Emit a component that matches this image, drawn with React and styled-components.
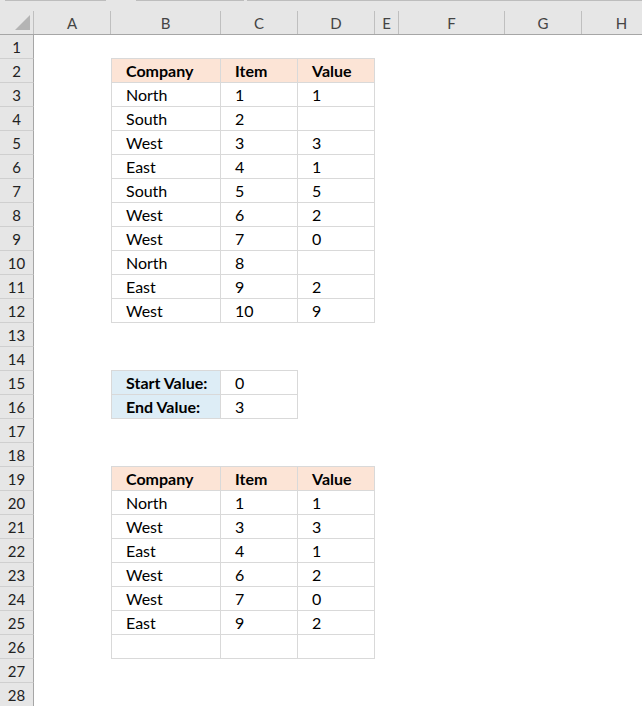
import React from 'react';
import styled, { createGlobalStyle } from 'styled-components';

const GlobalStyle = createGlobalStyle`
  html, body {
    margin: 0;
    padding: 0;
    background: #ffffff;
  }
  * {
    box-sizing: border-box;
  }
`;

const COLUMNS = [
  { name: 'A', width: 77 },
  { name: 'B', width: 110 },
  { name: 'C', width: 77 },
  { name: 'D', width: 77 },
  { name: 'E', width: 24 },
  { name: 'F', width: 106 },
  { name: 'G', width: 77 },
  { name: 'H', width: 80 },
];

const TEMPLATE = `34px ${COLUMNS.map((c) => `${c.width}px`).join(' ')}`;

// rows of [B, C, D]
const firstTable = [
  ['North', '1', '1'],
  ['South', '2', ''],
  ['West', '3', '3'],
  ['East', '4', '1'],
  ['South', '5', '5'],
  ['West', '6', '2'],
  ['West', '7', '0'],
  ['North', '8', ''],
  ['East', '9', '2'],
  ['West', '10', '9'],
];

const secondTable = [
  ['North', '1', '1'],
  ['West', '3', '3'],
  ['East', '4', '1'],
  ['West', '6', '2'],
  ['West', '7', '0'],
  ['East', '9', '2'],
  ['', '', ''],
];

const buildRows = () => {
  const rows = {};
  const header = ['Company', 'Item', 'Value'];
  rows[2] = header.map((text) => ({ text, bold: true, fill: '#fce4d6', top: true }));
  firstTable.forEach((r, i) => {
    rows[3 + i] = r.map((text) => ({ text }));
  });
  rows[15] = [
    { text: 'Start Value:', bold: true, fill: '#ddedf6', top: true },
    { text: '0', top: true },
  ];
  rows[16] = [
    { text: 'End Value:', bold: true, fill: '#ddedf6' },
    { text: '3' },
  ];
  rows[19] = header.map((text) => ({ text, bold: true, fill: '#fce4d6', top: true }));
  secondTable.forEach((r, i) => {
    rows[20 + i] = r.map((text) => ({ text }));
  });
  return rows;
};

const ROWS = buildRows();

const Sheet = styled.div`
  width: 642px;
  height: 706px;
  overflow: hidden;
  background: #ffffff;
  font-family: Lato, 'Open Sans', sans-serif;
  font-size: 16px;
  color: #000000;
`;

const TopStrip = styled.div`
  height: 11px;
  background: #e6e6e6;
  display: flex;
  padding-left: 5px;
`;

const TabLine = styled.div`
  height: 1px;
  background: #bdbdbd;
  width: ${(p) => p.$w}px;
  margin-right: ${(p) => p.$gap || 0}px;
`;

const HeaderRow = styled.div`
  display: grid;
  grid-template-columns: ${TEMPLATE};
  height: 24px;
  background: #e6e6e6;
  border-bottom: 1px solid #a6a6a6;
`;

const Corner = styled.div`
  position: relative;
  border-right: 1px solid #bfbfbf;
  &::after {
    content: '';
    position: absolute;
    right: 3px;
    bottom: 4px;
    width: 0;
    height: 0;
    border-left: 15px solid transparent;
    border-bottom: 15px solid #b4b4b4;
  }
`;

const ColLabel = styled.div`
  display: flex;
  align-items: center;
  justify-content: center;
  border-right: 1px solid #bfbfbf;
  color: #444444;
  font-size: 15px;
  padding-top: 1px;
`;

const Row = styled.div`
  display: grid;
  grid-template-columns: ${TEMPLATE};
  height: 24px;
`;

const RowNumber = styled.div`
  background: #e6e6e6;
  border-right: 1px solid #a6a6a6;
  border-bottom: 1px solid #cfcfcf;
  display: flex;
  align-items: center;
  justify-content: center;
  color: #222222;
  font-size: 15px;
  padding-top: 1px;
`;

const Cell = styled.div`
  background: ${(p) => p.$fill || '#ffffff'};
  font-weight: ${(p) => (p.$bold ? 700 : 400)};
  border-right: ${(p) => (p.$bordered ? '1px solid #d9d9d9' : 'none')};
  border-bottom: ${(p) => (p.$bordered ? '1px solid #d9d9d9' : 'none')};
  border-top: ${(p) => (p.$top ? '1px solid #d9d9d9' : 'none')};
  border-left: ${(p) => (p.$left ? '1px solid #d9d9d9' : 'none')};
  margin-top: ${(p) => (p.$top ? '-1px' : '0')};
  display: flex;
  align-items: center;
  padding-left: 14px;
  white-space: nowrap;
  overflow: hidden;
`;

const App = () => {
  const rowNumbers = Array.from({ length: 28 }, (_, i) => i + 1);
  return (
    <Sheet>
      <GlobalStyle />
      <TopStrip>
        <TabLine $w={102} $gap={30} />
        <TabLine $w={110} $gap={3} />
        <TabLine $w={400} />
      </TopStrip>
      <HeaderRow>
        <Corner />
        {COLUMNS.map((c) => (
          <ColLabel key={c.name}>{c.name}</ColLabel>
        ))}
      </HeaderRow>
      {rowNumbers.map((n) => {
        const cells = ROWS[n] || [];
        return (
          <Row key={n}>
            <RowNumber>{n}</RowNumber>
            {COLUMNS.map((c, ci) => {
              const data = ci >= 1 && ci <= 3 ? cells[ci - 1] : undefined;
              if (!data) return <Cell key={c.name} />;
              return (
                <Cell
                  key={c.name}
                  $bordered
                  $left={ci === 1}
                  $top={data.top}
                  $bold={data.bold}
                  $fill={data.fill}
                >
                  {data.text}
                </Cell>
              );
            })}
          </Row>
        );
      })}
    </Sheet>
  );
};

export default App;
